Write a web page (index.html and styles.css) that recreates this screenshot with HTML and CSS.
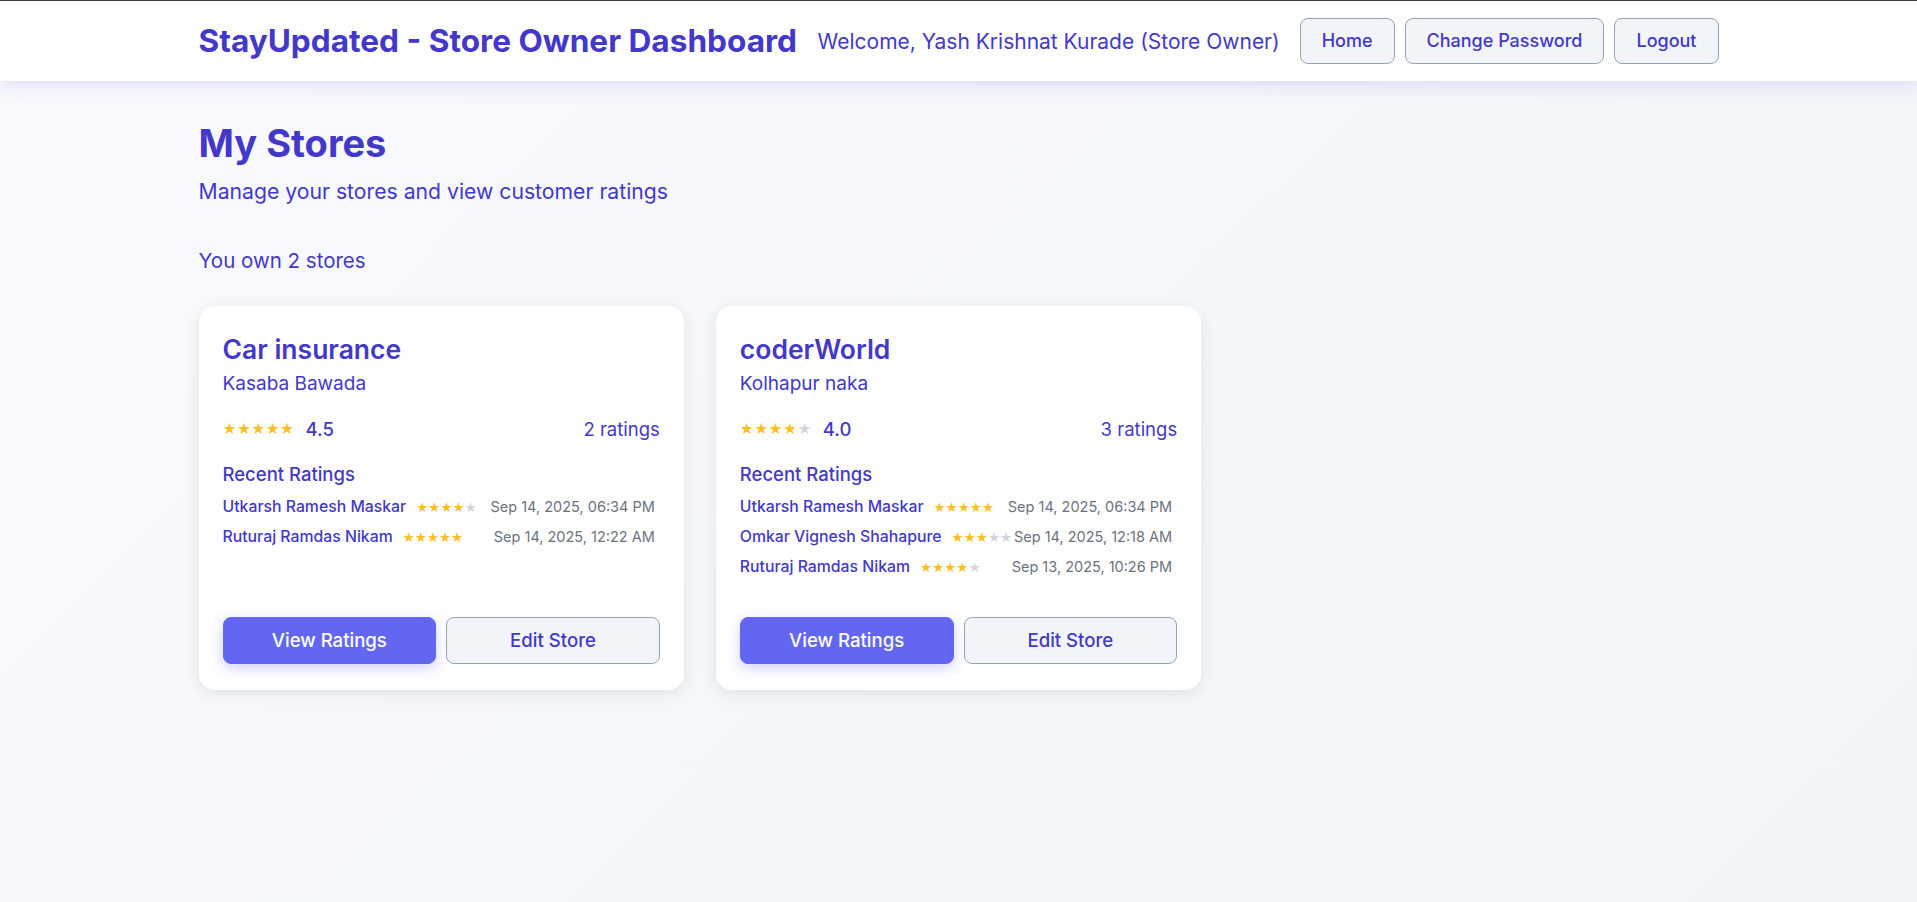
FILE: index.html
```html
<!DOCTYPE html>
<html lang="en">
<head>
<meta charset="utf-8">
<title>StayUpdated - Store Owner Dashboard</title>
<link rel="stylesheet" href="styles.css">
</head>
<body>
<header class="topbar">
  <div class="topbar-inner">
    <h1 class="brand">StayUpdated - Store Owner Dashboard</h1>
    <nav class="nav">
      <span class="welcome">Welcome, Yash Krishnat Kurade (Store Owner)</span>
      <button class="btn btn-outline">Home</button>
      <button class="btn btn-outline">Change Password</button>
      <button class="btn btn-outline">Logout</button>
    </nav>
  </div>
</header>
<main class="page">
  <h2 class="page-title">My Stores</h2>
  <p class="page-sub">Manage your stores and view customer ratings</p>
  <p class="count">You own 2 stores</p>
  <div class="grid">
    <article class="card">
      <h3 class="card-title">Car insurance</h3>
      <p class="card-addr">Kasaba Bawada</p>
      <div class="summary">
        <span class="stars stars-lg"><span class="on">★★★★★</span></span>
        <span class="avg">4.5</span>
        <span class="total">2 ratings</span>
      </div>
      <h4 class="recent-title">Recent Ratings</h4>
      <ul class="recent">
        <li class="row"><span class="who">Utkarsh Ramesh Maskar</span><span class="stars stars-sm"><span class="on">★★★★</span><span class="off">★</span></span><span class="when">Sep 14, 2025, 06:34 PM</span></li>
        <li class="row"><span class="who">Ruturaj Ramdas Nikam</span><span class="stars stars-sm"><span class="on">★★★★★</span></span><span class="when">Sep 14, 2025, 12:22 AM</span></li>
      </ul>
      <div class="actions">
        <button class="btn btn-primary">View Ratings</button>
        <button class="btn btn-outline">Edit Store</button>
      </div>
    </article>
    <article class="card">
      <h3 class="card-title">coderWorld</h3>
      <p class="card-addr">Kolhapur naka</p>
      <div class="summary">
        <span class="stars stars-lg"><span class="on">★★★★</span><span class="off">★</span></span>
        <span class="avg">4.0</span>
        <span class="total">3 ratings</span>
      </div>
      <h4 class="recent-title">Recent Ratings</h4>
      <ul class="recent">
        <li class="row"><span class="who">Utkarsh Ramesh Maskar</span><span class="stars stars-sm"><span class="on">★★★★★</span></span><span class="when">Sep 14, 2025, 06:34 PM</span></li>
        <li class="row"><span class="who">Omkar Vignesh Shahapure</span><span class="stars stars-sm"><span class="on">★★★</span><span class="off">★★</span></span><span class="when">Sep 14, 2025, 12:18 AM</span></li>
        <li class="row"><span class="who">Ruturaj Ramdas Nikam</span><span class="stars stars-sm"><span class="on">★★★★</span><span class="off">★</span></span><span class="when">Sep 13, 2025, 10:26 PM</span></li>
      </ul>
      <div class="actions">
        <button class="btn btn-primary">View Ratings</button>
        <button class="btn btn-outline">Edit Store</button>
      </div>
    </article>
  </div>
</main>
</body>
</html>
```

FILE: styles.css
```css
* { box-sizing: border-box; }

html, body { height: 100%; }

body {
  margin: 0;
  font-family: Inter, "Open Sans", sans-serif;
  color: #4338ca;
  background: linear-gradient(135deg, #f8fafc 0%, #f1f5f9 100%);
  border-top: 1px solid #3a3a3a;
}

.topbar {
  background: #ffffff;
  box-shadow: 0 4px 18px rgba(99, 102, 241, 0.18);
  position: relative;
}

.topbar-inner {
  max-width: 1600px;
  margin: 0 auto;
  padding: 17px 40px;
  display: flex;
  align-items: center;
  justify-content: space-between;
}

.brand {
  margin: 0;
  font-size: 31.6px;
  font-weight: 700;
  line-height: 1.2;
  color: #4338ca;
}

.nav {
  display: flex;
  align-items: center;
  gap: 10px;
}

.welcome {
  font-size: 21px;
  margin-right: 10px;
  color: #4338ca;
}

.btn {
  font-family: inherit;
  font-size: 18px;
  font-weight: 500;
  line-height: 26px;
  padding: 9px 21px;
  border-radius: 8px;
  cursor: pointer;
}

.btn-outline {
  background: #f1f5f9;
  border: 1px solid #94a3b8;
  color: #4338ca;
}

.btn-primary {
  background: #6366f1;
  border: 1px solid #6366f1;
  color: #ffffff;
  box-shadow: 0 4px 14px rgba(99, 102, 241, 0.3);
}

.page {
  max-width: 1600px;
  margin: 0 auto;
  padding: 40px 40px;
}

.page-title {
  margin: 0 0 11px;
  font-size: 38px;
  font-weight: 700;
  line-height: 1.2;
}

.page-sub {
  margin: 0;
  font-size: 21.2px;
  line-height: 27px;
}

.count {
  margin: 42px 0 32px;
  font-size: 20.5px;
  line-height: 27px;
}

.grid {
  display: grid;
  grid-template-columns: repeat(3, 1fr);
  gap: 32px;
}

.card {
  background: #ffffff;
  border-radius: 16px;
  padding: 26px 24px 26px;
  box-shadow: 0 4px 16px rgba(15, 23, 42, 0.09);
  display: flex;
  flex-direction: column;
}

.card-title {
  margin: 0;
  font-size: 26.5px;
  font-weight: 600;
  line-height: 34px;
}

.card-addr {
  margin: 5px 0 0;
  font-size: 19px;
  line-height: 26px;
}

.summary {
  margin-top: 19px;
  display: flex;
  align-items: center;
  font-size: 18.5px;
  line-height: 26px;
}

.stars { font-family: "DejaVu Sans", sans-serif; white-space: nowrap; }
.stars .on { color: #fbbf24; }
.stars .off { color: #d1d5db; }

.stars-lg { font-size: 15.5px; letter-spacing: 0.5px; }

.avg {
  margin-left: 11px;
  font-weight: 500;
}

.total { margin-left: auto; }

.recent-title {
  margin: 19px 0 5px;
  font-size: 18.5px;
  font-weight: 500;
  line-height: 26px;
}

.recent {
  list-style: none;
  margin: 0 0 35px;
  padding: 0;
}

.row {
  display: flex;
  align-items: center;
  padding: 4px 5px 4px 0;
  line-height: 22px;
  font-size: 15.8px;
}

.who { font-weight: 500; }

.stars-sm {
  font-size: 13.5px;
  margin-left: 10px;
}

.when {
  margin-left: auto;
  color: #6b7280;
  font-size: 14.5px;
}

.actions {
  margin-top: auto;
  display: flex;
  gap: 10px;
}

.actions .btn {
  flex: 1;
  padding: 10px 12px;
  line-height: 25px;
  font-size: 18.6px;
}
```
